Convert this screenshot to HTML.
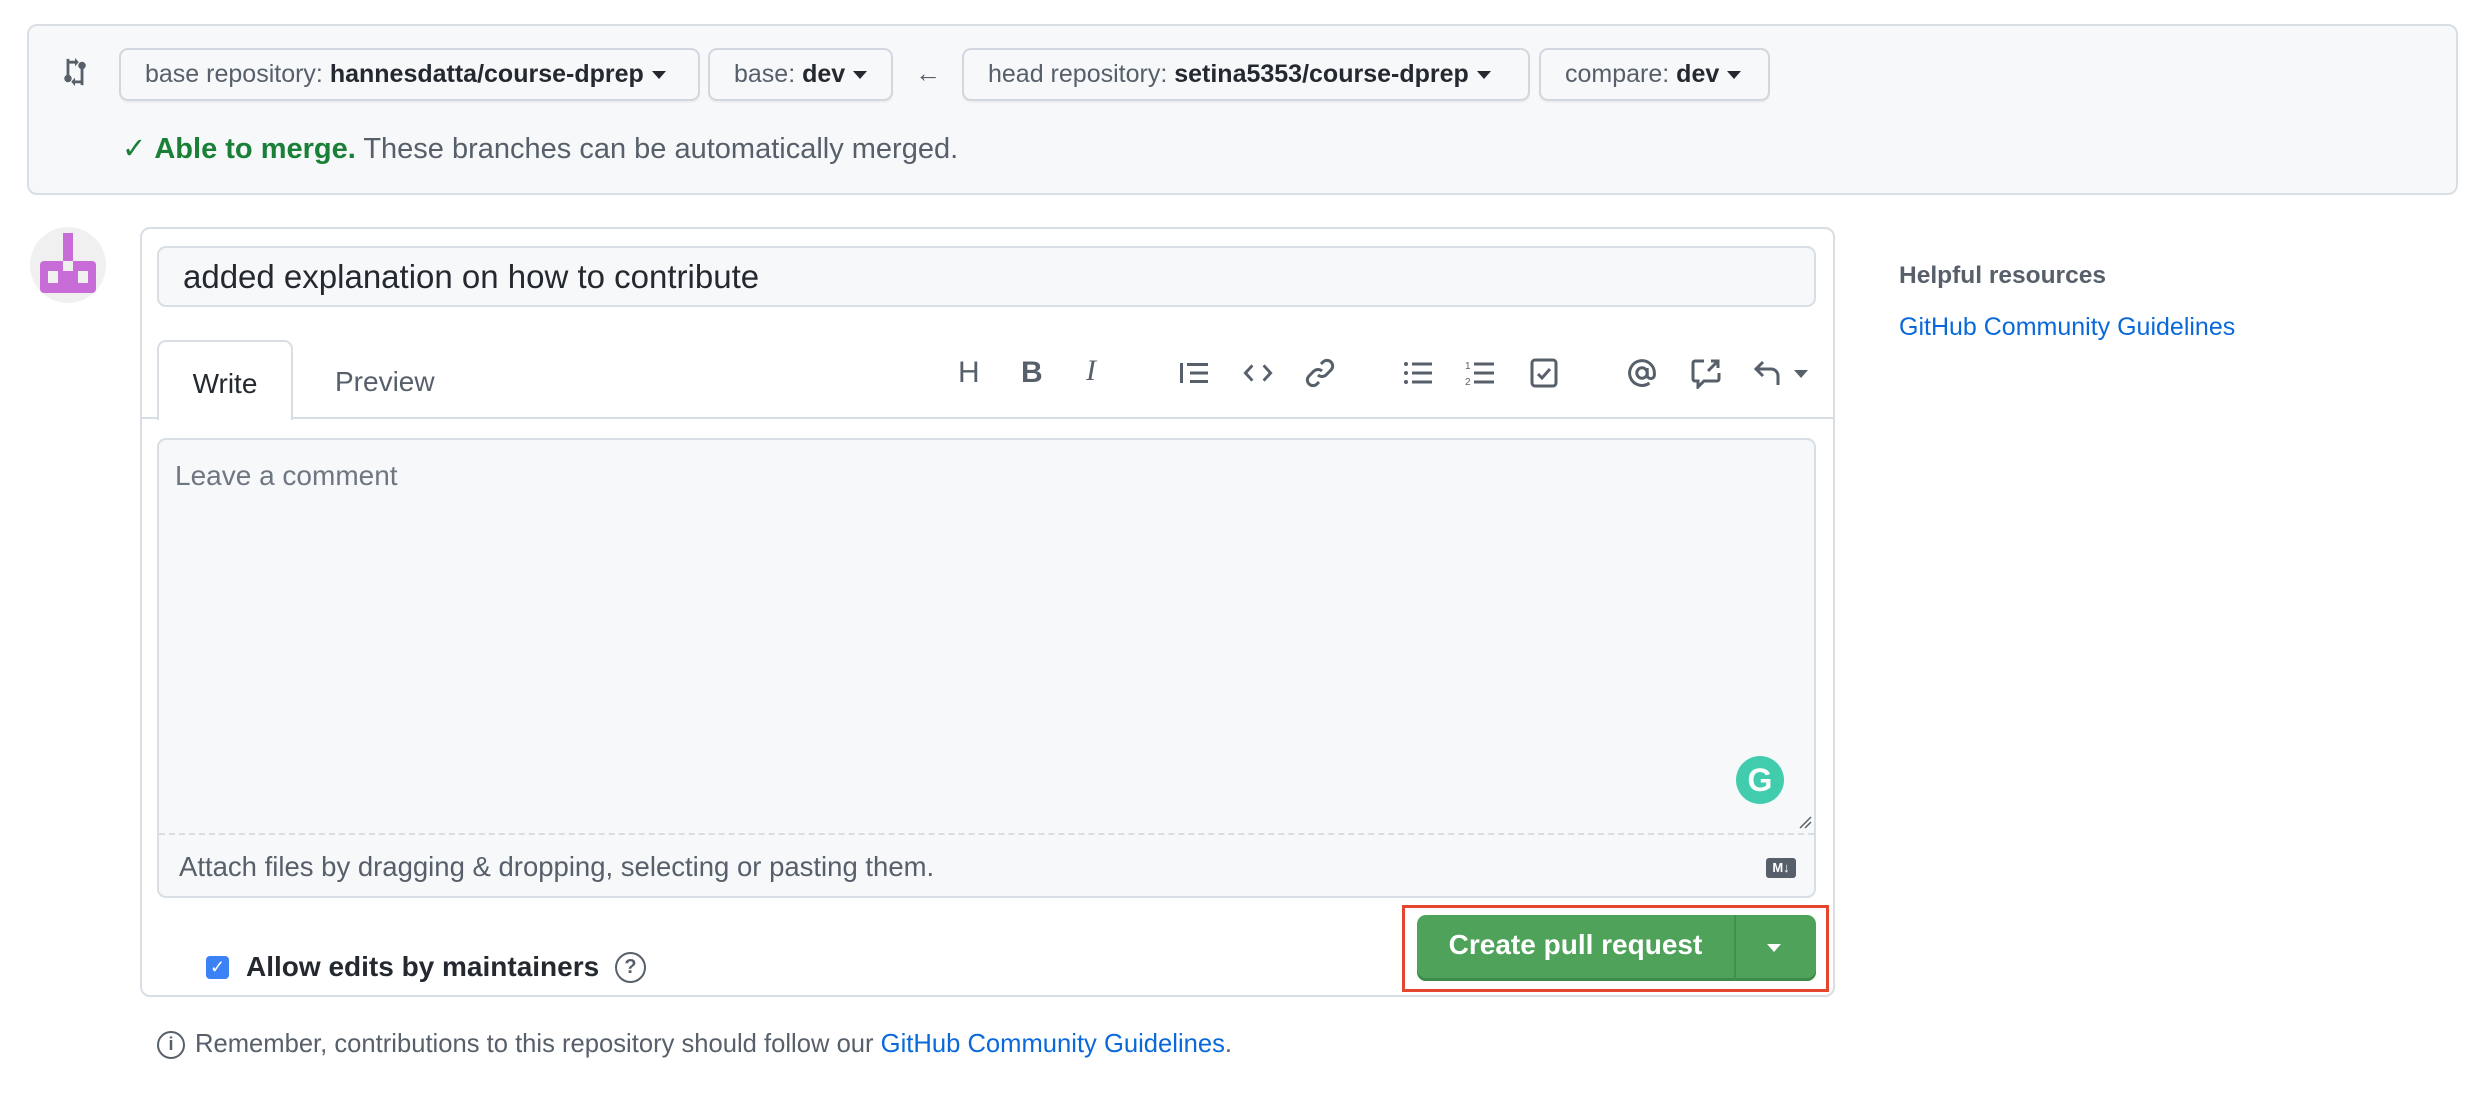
<!DOCTYPE html>
<html><head><meta charset="utf-8"><style>
*{box-sizing:border-box;margin:0;padding:0}
body{width:2490px;height:1100px;background:#fff;font-family:"Liberation Sans",sans-serif;color:#24292f;position:relative;overflow:hidden}
.a{position:absolute}
.btn{position:absolute;top:48px;height:53px;border:2px solid #d0d7de;border-radius:9px;background:#f6f8fa;font-size:25px;line-height:49px;padding-left:24px;color:#57606a;white-space:nowrap;box-shadow:0 2px 0 rgba(27,31,36,.04)}
.btn b{color:#24292f}
.caret{display:inline-block;width:0;height:0;border-left:7px solid transparent;border-right:7px solid transparent;border-top:8px solid #24292f;vertical-align:middle;margin-left:8px}
.ic{position:absolute;top:357px}
</style></head><body>
<div class="a" style="left:27px;top:24px;width:2431px;height:171px;background:#f6f8fa;border:2px solid #d8dee4;border-radius:10px"></div>
<svg class="a" style="left:60px;top:57px" width="30" height="30" viewBox="0 0 16 16" fill="#57606a"><path d="M3.5 1v8.6a2 2 0 1 0 1.5 0V1H3.5zM11 6.4V15h1.5V6.4a2 2 0 1 0-1.5 0zM5 2h3v1.5H5zM8 .5l2 2.2L8 5zM8 12.5h3v1.5H8zM8 11l-2 2.2L8 15.5z"/></svg>
<div class="btn" style="left:119px;width:581px">base repository: <b>hannesdatta/course-dprep</b><span class="caret"></span></div>
<div class="btn" style="left:708px;width:185px">base: <b>dev</b><span class="caret"></span></div>
<div class="a" style="left:915px;top:58px;font-size:26px;color:#57606a">←</div>
<div class="btn" style="left:962px;width:568px">head repository: <b>setina5353/course-dprep</b><span class="caret"></span></div>
<div class="btn" style="left:1539px;width:231px">compare: <b>dev</b><span class="caret"></span></div>
<div class="a" style="left:122px;top:131px;font-size:29px;color:#57606a;white-space:nowrap"><span style="color:#1a7f37">✓ <b>Able to merge.</b></span> These branches can be automatically merged.</div>

<svg class="a" style="left:30px;top:227px" width="76" height="76" viewBox="0 0 76 76"><circle cx="38" cy="38" r="38" fill="#f0f0f0"/><g fill="#c86dd7"><rect x="33" y="6" width="10" height="28"/><rect x="10" y="34" width="56" height="32" rx="4"/></g><g fill="#f0f0f0"><rect x="18" y="44" width="10" height="12"/><rect x="48" y="44" width="10" height="12"/><rect x="33" y="34" width="10" height="10"/></g></svg>

<div class="a" style="left:140px;top:227px;width:1695px;height:770px;border:2px solid #d8dee4;border-radius:10px;background:#fff"></div>
<div class="a" style="left:157px;top:246px;width:1659px;height:61px;border:2px solid #d8dee4;border-radius:9px;background:#f6f8fa;font-size:33px;line-height:57px;padding-left:24px">added explanation on how to contribute</div>
<div class="a" style="left:141px;top:417px;width:1692px;height:2px;background:#d8dee4"></div>
<div class="a" style="left:157px;top:340px;width:136px;height:80px;border:2px solid #d8dee4;border-bottom:none;border-radius:9px 9px 0 0;background:#fff;font-size:28px;line-height:84px;text-align:center">Write</div>
<div class="a" style="left:335px;top:366px;font-size:28px;color:#57606a">Preview</div>

<div class="ic" style="left:958px;top:356px;font-size:30px;color:#57606a">H</div>
<div class="ic" style="left:1021px;top:356px;font-size:30px;font-weight:bold;color:#57606a">B</div>
<div class="ic" style="left:1086px;top:354px;font-size:30px;font-style:italic;font-family:'Liberation Serif',serif;color:#57606a">I</div>
<svg class="ic" style="left:1178px" width="32" height="32" viewBox="0 0 16 16" fill="#57606a"><path d="M1 3h1.5v10H1zM4.5 3H15v1.5H4.5zM6 7.25h9v1.5H6zM6 11.5h9V13H6z"/></svg>
<svg class="ic" style="left:1242px" width="32" height="32" viewBox="0 0 16 16" fill="#57606a"><path d="M4.7 3.7l-4 4.3 4 4.3 1-1L2.7 8l3-3.3zm6.6 0l-1 1 3 3.3-3 3.3 1 1 4-4.3z"/></svg>
<svg class="ic" style="left:1304px" width="32" height="32" viewBox="0 0 16 16" fill="none" stroke="#57606a" stroke-width="1.5"><path d="M7 9a3 3 0 0 0 4 0l2.5-2.5a2.8 2.8 0 0 0-4-4L8.5 3.5M9 7a3 3 0 0 0-4 0L2.5 9.5a2.8 2.8 0 0 0 4 4l1-1"/></svg>
<svg class="ic" style="left:1402px" width="32" height="32" viewBox="0 0 16 16" fill="#57606a"><circle cx="2" cy="3.5" r="1"/><circle cx="2" cy="8" r="1"/><circle cx="2" cy="12.5" r="1"/><path d="M5 2.75h10v1.5H5zM5 7.25h10v1.5H5zM5 11.75h10v1.5H5z"/></svg>
<svg class="ic" style="left:1464px" width="32" height="32" viewBox="0 0 16 16" fill="#57606a"><path d="M5 2.75h10v1.5H5zM5 7.25h10v1.5H5zM5 11.75h10v1.5H5z"/><text x="0.5" y="6" font-size="5" font-family="Liberation Sans">1</text><text x="0.5" y="14" font-size="5" font-family="Liberation Sans">2</text></svg>
<svg class="ic" style="left:1528px" width="32" height="32" viewBox="0 0 16 16" fill="none" stroke="#57606a" stroke-width="1.5"><rect x="2" y="1.5" width="12" height="13" rx="1.5"/><path d="M5 8.5l2 2 4-4.5"/></svg>
<svg class="ic" style="left:1626px" width="32" height="32" viewBox="0 0 16 16" fill="none" stroke="#57606a" stroke-width="1.5"><circle cx="8" cy="8" r="2.6"/><path d="M10.6 5.5v3.5a1.8 1.8 0 0 0 3.6 0V8a6.2 6.2 0 1 0-2.5 5"/></svg>
<svg class="ic" style="left:1690px" width="32" height="32" viewBox="0 0 16 16" fill="none" stroke="#57606a" stroke-width="1.5"><path d="M7 2H2.5a1 1 0 0 0-1 1v8a1 1 0 0 0 1 1H4v3l3-3h6.5a1 1 0 0 0 1-1V8M9 7l5-5M10.5 2H14v3.5"/></svg>
<svg class="ic" style="left:1752px" width="32" height="32" viewBox="0 0 16 16" fill="none" stroke="#57606a" stroke-width="1.5"><path d="M5.5 2.5L2 6l3.5 3.5M2 6h7.5a3.5 3.5 0 0 1 3.5 3.5V14"/></svg>
<div class="a" style="left:1794px;top:370px;width:0;height:0;border-left:7px solid transparent;border-right:7px solid transparent;border-top:8px solid #57606a"></div>

<div class="a" style="left:157px;top:438px;width:1659px;height:460px;border:2px solid #d8dee4;border-radius:9px;background:#f6f8fa"></div>
<div class="a" style="left:175px;top:460px;font-size:28px;color:#6e7781">Leave a comment</div>
<div class="a" style="left:159px;top:833px;width:1655px;border-top:2px dashed #d8dee4"></div>
<div class="a" style="left:179px;top:851px;font-size:27.5px;color:#57606a">Attach files by dragging &amp; dropping, selecting or pasting them.</div>
<div class="a" style="left:1736px;top:756px;width:48px;height:48px;border-radius:50%;background:#15c39a;opacity:.8;color:#fff;font-size:32px;line-height:48px;text-align:center;font-weight:bold">G</div>
<div class="a" style="left:1766px;top:858px;width:30px;height:20px;background:#57606a;border-radius:3px;color:#fff;font-size:13px;font-weight:bold;line-height:20px;text-align:center">M↓</div>
<svg class="a" style="left:1798px;top:815px" width="14" height="14"><path d="M2 13L13 2M7 13l6-6" stroke="#57606a" stroke-width="1.5"/></svg>

<div class="a" style="left:1402px;top:905px;width:427px;height:87px;border:3px solid #e6452f"></div>
<div class="a" style="left:1417px;top:915px;width:399px;height:66px;background:#4fa25a;border-radius:9px;box-shadow:inset 0 -3px 0 #3e8a48"></div>
<div class="a" style="left:1734px;top:915px;width:2px;height:66px;background:#43904d"></div>
<div class="a" style="left:1417px;top:929px;width:317px;text-align:center;color:#fff;font-size:28px;font-weight:bold">Create pull request</div>
<div class="a" style="left:1767px;top:944px;width:0;height:0;border-left:7px solid transparent;border-right:7px solid transparent;border-top:8px solid #fff"></div>

<div class="a" style="left:206px;top:956px;width:23px;height:23px;background:#3b82f6;border-radius:4px;color:#fff;font-size:18px;line-height:23px;text-align:center">✓</div>
<div class="a" style="left:246px;top:951px;font-size:28px;font-weight:bold">Allow edits by maintainers</div>
<div class="a" style="left:615px;top:952px;width:31px;height:31px;border:2.5px solid #57606a;border-radius:50%;color:#57606a;font-size:20px;line-height:26px;text-align:center;font-weight:bold">?</div>

<div class="a" style="left:157px;top:1031px;width:28px;height:28px;border:2.5px solid #57606a;border-radius:50%;color:#57606a;font-size:18px;line-height:23px;text-align:center;font-weight:bold">i</div>
<div class="a" style="left:195px;top:1030px;font-size:25.6px;color:#57606a;white-space:nowrap">Remember, contributions to this repository should follow our <span style="color:#0969da">GitHub Community Guidelines</span>.</div>

<div class="a" style="left:1899px;top:262px;font-size:24.5px;font-weight:bold;color:#57606a">Helpful resources</div>
<div class="a" style="left:1899px;top:313px;font-size:25px;color:#0969da">GitHub Community Guidelines</div>
</body></html>
